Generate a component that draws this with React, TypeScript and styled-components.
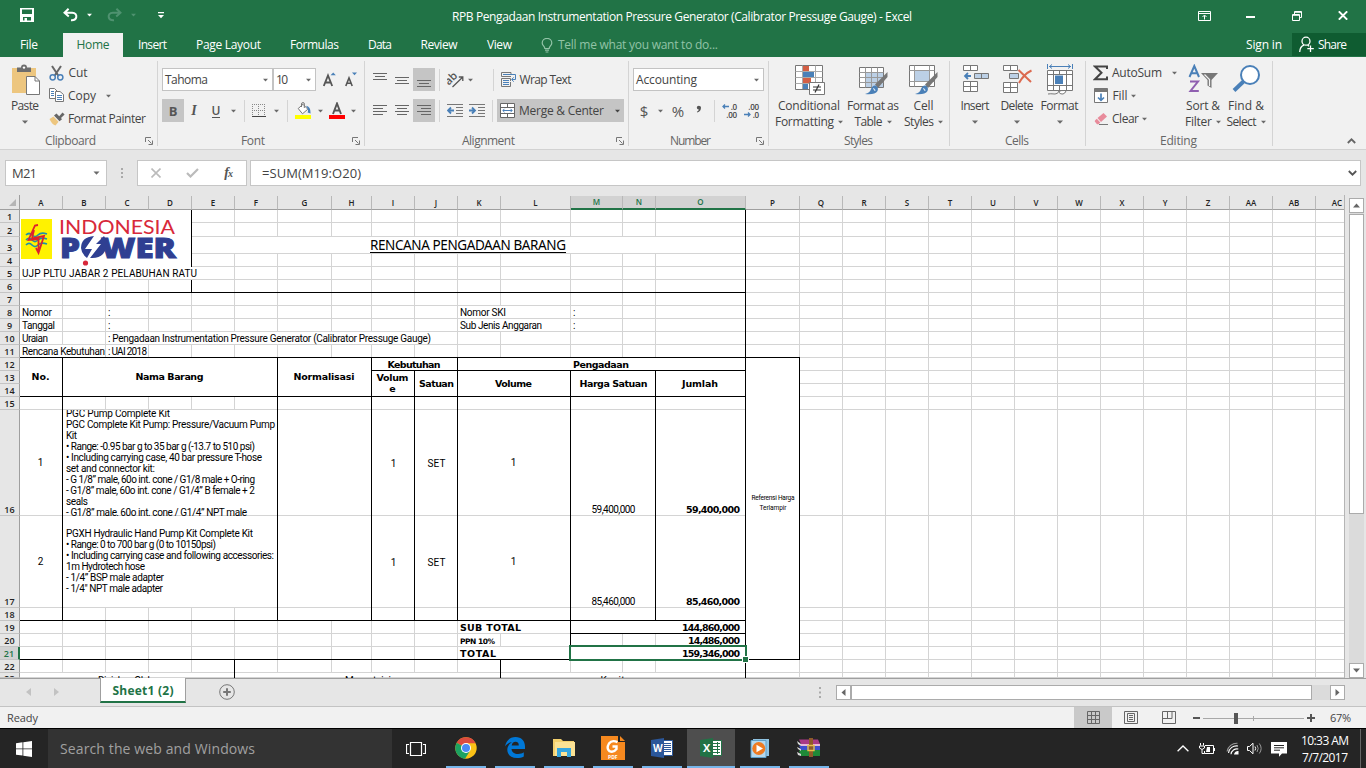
import React, { useLayoutEffect, useRef, useState } from 'react';
import styled, { createGlobalStyle, css } from 'styled-components';

const Global = createGlobalStyle`
  * { box-sizing: border-box; }
  body { margin: 0; overflow: hidden; background: #e6e6e6; }
  svg { display: block; flex: none; }
`;

const UI = `"Open Sans", "Noto Sans", sans-serif`;
const CELL = `Roboto, "Liberation Sans", Arial, sans-serif`;
const CELL_BOLD = `"DejaVu Sans", Verdana, sans-serif`;

/* ---------- text that is tracked to a given width ---------- */

const FitSpan = styled.span`
  display: inline-block;
  flex: none;
  white-space: pre;
`;

function Fit({ w, children }: { w: number; children: string }) {
  const ref = useRef<HTMLSpanElement>(null);
  const [spacing, setSpacing] = useState(0);
  useLayoutEffect(() => {
    const el = ref.current;
    if (!el) return;
    el.style.letterSpacing = '0px';
    const natural = el.getBoundingClientRect().width;
    const next = (w - natural) / Math.max(1, children.length - 1);
    el.style.letterSpacing = `${next}px`;
    setSpacing(next);
  }, [w, children]);
  return (
    <FitSpan ref={ref} style={{ letterSpacing: spacing, marginRight: -spacing }}>
      {children}
    </FitSpan>
  );
}

/* ---------- shared pieces ---------- */

const Window = styled.div`
  width: 1366px;
  height: 768px;
  display: flex;
  flex-direction: column;
  overflow: hidden;
  background: #e6e6e6;
  font-family: ${UI};
  font-size: 12px;
  line-height: 16px;
  color: #444;
`;

const Slot = styled.div<{ $w: number; $ml?: number; $align?: string; $bg?: string; $h?: number; $color?: string }>`
  flex: none;
  width: ${p => p.$w}px;
  margin-left: ${p => p.$ml || 0}px;
  height: ${p => (p.$h ? `${p.$h}px` : 'auto')};
  background: ${p => p.$bg || 'transparent'};
  color: ${p => p.$color || 'inherit'};
  display: flex;
  align-items: center;
  justify-content: ${p => p.$align || 'center'};
`;

const Caret = ({ c = '#6a6a6a', s = 6 }: { c?: string; s?: number }) => (
  <svg width={s} height="4" viewBox="0 0 6 4">
    <path d="M0 0.5H6L3 3.8Z" fill={c} />
  </svg>
);

/* ---------- title bar ---------- */

const TitleBar = styled.header`
  height: 33px;
  flex: none;
  display: flex;
  background: #217346;
  color: #fff;
`;
const QuickBar = styled.div`
  width: 452px;
  height: 30px;
  display: flex;
  align-items: center;
`;
const DocTitle = styled.div`
  width: 746px;
  height: 33px;
  display: flex;
  align-items: center;
`;
const WindowButtons = styled.div`
  display: flex;
  align-items: center;
  height: 31px;
`;

function Title() {
  return (
    <TitleBar>
      <QuickBar>
        <Slot $w={14} $ml={20}>
          <svg width="14" height="14" viewBox="0 0 14 14">
            <path d="M0 0H14V14H0Z M2 1.5V6H12V1.5Z M3 9V12.5H4.5V10H7V12.5H11V9Z" fill="#fff" fillRule="evenodd" />
          </svg>
        </Slot>
        <Slot $w={15} $ml={29}>
          <svg width="15" height="14" viewBox="0 0 15 14" fill="none" stroke="#fff" strokeWidth="2">
            <path d="M5.6 0.8L1.5 4.8L5.8 8.6M1.5 4.8H9.2C12.5 4.8 13.6 7 13.3 9C13 11 11 12.4 8 12.2" />
          </svg>
        </Slot>
        <Slot $w={6} $ml={8}><Caret c="#fff" s={5} /></Slot>
        <Slot $w={15} $ml={15}>
          <svg width="15" height="14" viewBox="0 0 15 14" fill="none" stroke="#4f9270" strokeWidth="2">
            <path d="M9.4 0.8L13.5 4.8L9.2 8.6M13.5 4.8H5.8C2.5 4.8 1.4 7 1.7 9C2 11 4 12.4 7 12.2" />
          </svg>
        </Slot>
        <Slot $w={6} $ml={8}><Caret c="#4f9270" s={5} /></Slot>
        <Slot $w={6} $ml={22}>
          <svg width="6" height="7" viewBox="0 0 6 7">
            <path d="M0 0H6V1.2H0ZM0 3H6L3 6.3Z" fill="#fff" />
          </svg>
        </Slot>
      </QuickBar>
      <DocTitle>
        <Fit w={460}>RPB Pengadaan Instrumentation Pressure Generator (Calibrator Pressuge Gauge) - Excel</Fit>
      </DocTitle>
      <WindowButtons>
        <svg width="13" height="10" viewBox="0 0 13 10" fill="none" stroke="#fff">
          <path d="M0.5 0.5H12.5V9.5H0.5ZM0.5 2.5H12.5M6.5 8.5V4.5M4.5 6L6.5 4L8.5 6" />
        </svg>
        <Slot $w={9} $ml={35}><svg width="9" height="4" viewBox="0 0 9 4"><path d="M0 2H9V4H0Z" fill="#fff" /></svg></Slot>
        <Slot $w={10} $ml={37}>
          <svg width="10" height="10" viewBox="0 0 10 10" fill="none" stroke="#fff">
            <path d="M2.5 3V0.5H9.5V6.5H7.5M2.5 1.3H9.5M0.5 3.5H7.5V9.5H0.5ZM0.5 4.3H7.5" />
          </svg>
        </Slot>
        <Slot $w={10} $ml={36}>
          <svg width="10" height="9" viewBox="0 0 10 9" stroke="#fff" strokeWidth="2"><path d="M0.8 0.4L9.2 8.6M9.2 0.4L0.8 8.6" /></svg>
        </Slot>
      </WindowButtons>
    </TitleBar>
  );
}

/* ---------- ribbon tabs ---------- */

const TabBar = styled.nav`
  height: 24px;
  flex: none;
  display: flex;
  background: #217346;
  color: #fff;
`;
const Tab = styled.div<{ $w: number; $active?: boolean }>`
  width: ${p => p.$w}px;
  height: 24px;
  display: flex;
  align-items: center;
  justify-content: center;
  background: ${p => (p.$active ? '#f1f1f1' : 'transparent')};
  color: ${p => (p.$active ? '#217346' : '#fff')};
`;
const TellMe = styled.div`
  width: 705px;
  display: flex;
  align-items: center;
  gap: 5px;
  padding-left: 13px;
  color: #92c3a7;
`;
const ShareButton = styled.div`
  width: 74px;
  height: 23px;
  margin-left: 10px;
  padding-left: 7px;
  display: flex;
  align-items: center;
  gap: 4px;
  background: #0f5c31;
`;

function Tabs() {
  return (
    <TabBar>
      <Slot $w={63} $align="flex-start"><Slot $w={18} $ml={20}><Fit w={18}>File</Fit></Slot></Slot>
      <Tab $w={60} $active><Fit w={33}>Home</Fit></Tab>
      <Tab $w={59}><Fit w={29}>Insert</Fit></Tab>
      <Tab $w={93}><Fit w={65}>Page Layout</Fit></Tab>
      <Tab $w={79}><Fit w={49}>Formulas</Fit></Tab>
      <Tab $w={52}><Fit w={24}>Data</Fit></Tab>
      <Tab $w={66}><Fit w={37}>Review</Fit></Tab>
      <Tab $w={55}><Fit w={25}>View</Fit></Tab>
      <TellMe>
        <Slot $w={13}>
          <svg width="12" height="15" viewBox="0 0 12 15" fill="none" stroke="#92c3a7" strokeWidth="1.2">
            <path d="M3.8 10.5C3.8 8 1.2 7.8 1.2 5A4.6 4.4 0 0 1 10.8 5C10.8 7.8 8.2 8 8.2 10.5ZM4 12.2H8M4.6 14H7.4" />
          </svg>
        </Slot>
        <Fit w={160}>Tell me what you want to do...</Fit>
      </TellMe>
      <Slot $w={36} $ml={14}><Fit w={36}>Sign in</Fit></Slot>
      <ShareButton>
        <svg width="15" height="17" viewBox="0 0 15 17" fill="none" stroke="#fff" strokeWidth="1.3">
          <circle cx="7" cy="5.2" r="4" />
          <path d="M0.7 16C0.9 12 2.6 10 5 9.2M8.6 9L10 10.3M11.5 9.5V16M8.3 12.7H14.8" />
        </svg>
        <Fit w={29}>Share</Fit>
      </ShareButton>
    </TabBar>
  );
}

/* ---------- ribbon ---------- */

const RibbonBar = styled.section`
  height: 93px;
  flex: none;
  display: flex;
  background: #f1f1f1;
  border-bottom: 1px solid #d2d2d2;
  padding-top: 4px;
`;
const Group = styled.div<{ $w: number }>`
  width: ${p => p.$w}px;
  height: 85px;
  flex: none;
  display: flex;
  flex-direction: column;
  border-right: 1px solid #d4d4d4;
`;
const GroupBody = styled.div`
  height: 70px;
  display: flex;
`;
const GroupLabel = styled.div<{ $pl: number }>`
  height: 15px;
  display: flex;
  align-items: center;
  justify-content: space-between;
  padding: 5px 4px 0 ${p => p.$pl}px;
  color: #666;
`;
const TwoRows = styled.div`
  display: flex;
  flex-direction: column;
  padding-top: 7px;
  gap: 8px;
`;
const ThreeRows = styled.div<{ $ml?: number }>`
  display: flex;
  flex-direction: column;
  margin-left: ${p => p.$ml || 0}px;
`;
const ToolRow = styled.div`
  height: 23px;
  display: flex;
  align-items: center;
`;
const Combo = styled.div<{ $w: number; $ml?: number }>`
  width: ${p => p.$w}px;
  height: 23px;
  margin-left: ${p => p.$ml || 0}px;
  padding: 0 4px 0 2px;
  display: flex;
  align-items: center;
  justify-content: space-between;
  background: #fff;
  border: 1px solid #c3c3c3;
`;
const Divider = styled.div<{ $ml: number }>`
  width: 1px;
  height: 22px;
  margin-left: ${p => p.$ml}px;
  background: #d4d4d4;
`;
const BigButton = styled.div<{ $w: number; $ml?: number }>`
  width: ${p => p.$w}px;
  margin-left: ${p => p.$ml || 0}px;
  flex: none;
  display: flex;
  flex-direction: column;
  align-items: center;
  padding-top: 3px;
`;
const BigIcon = styled.div`
  height: 34px;
  display: flex;
`;
const Line = styled.div`
  height: 16px;
  display: flex;
  align-items: center;
  justify-content: center;
  gap: 4px;
`;
const Glyph = styled.span<{ $size: number; $weight?: number; $italic?: boolean; $serif?: boolean; $under?: boolean }>`
  font-size: ${p => p.$size}px;
  line-height: 20px;
  font-weight: ${p => p.$weight || 400};
  font-style: ${p => (p.$italic ? 'italic' : 'normal')};
  font-family: ${p => (p.$serif ? `"Liberation Serif", serif` : UI)};
  ${p => p.$under && css`border-bottom: 1px solid #555; line-height: 13px;`}
  color: #555;
`;

const Launcher = () => (
  <svg width="8" height="8" viewBox="0 0 8 8" fill="none" stroke="#777">
    <path d="M0.5 5V0.5H6M3 3L6.5 6.5M7.5 3.5V7.5H3.5" />
  </svg>
);

const Lines = ({ rows, y = 1, gap = 3 }: { rows: [number, number][]; y?: number; gap?: number }) => (
  <svg width="14" height="14" viewBox="0 0 14 14" shapeRendering="crispEdges">
    {rows.map(([x, w], i) => (
      <rect key={i} x={x} y={y + i * gap} width={w} height="1" fill="#666" />
    ))}
  </svg>
);

function ClipboardGroup() {
  return (
    <Group $w={158}>
      <GroupBody>
        <BigButton $w={32} $ml={9}>
          <BigIcon>
            <svg width="30" height="31" viewBox="0 0 30 31">
              <path d="M2 4H26V29H2Z" fill="#edc67f" />
              <path d="M7 8V3.5H11Q11 0.5 14 0.5T17 3.5H21V8Z" fill="#6d6d6d" />
              <circle cx="14" cy="3.6" r="1.2" fill="#fff" />
              <path d="M16.5 12.5H25L29.5 17V30.5H16.5Z" fill="#fff" stroke="#777" />
              <path d="M25 12.5V17H29.5" fill="none" stroke="#777" />
            </svg>
          </BigIcon>
          <Line><Fit w={28}>Paste</Fit></Line>
          <Line><Caret /></Line>
        </BigButton>
        <ThreeRows $ml={8}>
          <ToolRow>
            <svg width="15" height="16" viewBox="0 0 15 16" fill="none">
              <path d="M3 1L9.6 11M12 1L5.4 11" stroke="#666" strokeWidth="2" />
              <circle cx="3.7" cy="12.3" r="2.6" stroke="#4a80b8" strokeWidth="1.5" />
              <circle cx="11.3" cy="12.3" r="2.6" stroke="#4a80b8" strokeWidth="1.5" />
            </svg>
            <Slot $w={20} $ml={4}><Fit w={19}>Cut</Fit></Slot>
          </ToolRow>
          <ToolRow>
            <svg width="15" height="15" viewBox="0 0 15 15" fill="#fff" stroke="#777">
              <path d="M0.5 0.5H5.5L8.5 3.5V10.5H0.5Z" />
              <path d="M6.5 3.5H11L14.5 6.5V13.5H6.5Z" />
              <path d="M2 3.5H5M2 5.5H5M2 7.5H5M8 7.5H13M8 9.5H13M8 11.5H13" stroke="#4a80b8" />
            </svg>
            <Slot $w={28} $ml={4}><Fit w={28}>Copy</Fit></Slot>
            <Slot $w={6} $ml={9}><Caret s={5} /></Slot>
          </ToolRow>
          <ToolRow>
            <svg width="16" height="14" viewBox="0 0 16 14">
              <path d="M0.5 7L4.5 4.5L9.5 9.8L6.5 13.5Q3 12.5 0.5 7Z" fill="#edc67f" />
              <path d="M5 3.5L7.5 1.5L10.2 4.2L13.5 0.4L15.6 2.4L12 6L13 7.2L10.5 9.3Z" fill="#666" />
            </svg>
            <Slot $w={78} $ml={3}><Fit w={78}>Format Painter</Fit></Slot>
          </ToolRow>
        </ThreeRows>
      </GroupBody>
      <GroupLabel $pl={45}><Fit w={51}>Clipboard</Fit><Launcher /></GroupLabel>
    </Group>
  );
}

function FontGroup() {
  return (
    <Group $w={207}>
      <GroupBody>
        <TwoRows>
          <ToolRow>
            <Combo $w={111} $ml={4}><Fit w={43}>Tahoma</Fit><Caret s={5} /></Combo>
            <Combo $w={43}><Fit w={12}>10</Fit><Caret s={5} /></Combo>
            <Slot $w={13} $ml={7}>
              <svg width="13" height="16" viewBox="0 0 13 16">
                <path d="M0.8 14L5 3.5L9.2 14M2.3 10.5H7.8" fill="none" stroke="#555" strokeWidth="1.8" />
                <path d="M7.6 3.2L10.2 0.4L12.8 3.2Z" fill="#4a80b8" />
              </svg>
            </Slot>
            <Slot $w={12} $ml={9}>
              <svg width="12" height="16" viewBox="0 0 12 16">
                <path d="M0.8 14L4 6L7.2 14M2 11.3H6" fill="none" stroke="#555" strokeWidth="1.6" />
                <path d="M7 0.5H12L9.5 3.2Z" fill="#4a80b8" />
              </svg>
            </Slot>
          </ToolRow>
          <ToolRow>
            <Slot $w={22} $ml={4} $h={23} $bg="#c5c5c5"><Glyph $size={13} $weight={700}>B</Glyph></Slot>
            <Slot $w={14} $ml={3}><Glyph $size={14} $weight={700} $italic $serif>I</Glyph></Slot>
            <Slot $w={12} $ml={9}><Glyph $size={12} $weight={600} $under>U</Glyph></Slot>
            <Slot $w={6} $ml={8}><Caret s={5} /></Slot>
            <Divider $ml={8} />
            <Slot $w={14} $ml={7}>
              <svg width="14" height="14" viewBox="0 0 14 14" shapeRendering="crispEdges" fill="none" stroke="#888">
                <path d="M0.5 0V13M6.5 0V13M12.5 0V13M0 0.5H13M0 6.5H13" strokeDasharray="1 1" />
                <path d="M0 12.5H14" stroke="#444" />
              </svg>
            </Slot>
            <Slot $w={6} $ml={7}><Caret s={5} /></Slot>
            <Divider $ml={8} />
            <Slot $w={16} $ml={7}>
              <svg width="16" height="17" viewBox="0 0 16 17">
                <path d="M3.2 6.5L8 2.3L12.8 7.2L7.5 11.8Z" fill="#fff" stroke="#777" />
                <path d="M6.5 5V2Q6.5 0.6 8 0.6T9.3 2V6" fill="none" stroke="#777" />
                <path d="M11 3.8Q15.8 4.5 15.6 11.5L12.6 10.5Q14 8 11 3.8Z" fill="#4a80b8" />
                <path d="M0 13H16V17H0Z" fill="#ff0" />
              </svg>
            </Slot>
            <Slot $w={6} $ml={6}><Caret s={5} /></Slot>
            <Slot $w={16} $ml={6}>
              <svg width="16" height="17" viewBox="0 0 16 17">
                <path d="M4 12L8 1.5L12 12M5.4 8.5H10.6" fill="none" stroke="#555" strokeWidth="1.9" />
                <path d="M0 13H16V17H0Z" fill="#f00" />
              </svg>
            </Slot>
            <Slot $w={6} $ml={5}><Caret s={5} /></Slot>
          </ToolRow>
        </TwoRows>
      </GroupBody>
      <GroupLabel $pl={83}><Fit w={24}>Font</Fit><Launcher /></GroupLabel>
    </Group>
  );
}

function AlignmentGroup() {
  return (
    <Group $w={264}>
      <GroupBody>
        <TwoRows>
          <ToolRow>
            <Slot $w={14} $ml={8}><Lines y={0} rows={[[0, 14], [2, 10], [0, 14]]} /></Slot>
            <Slot $w={14} $ml={8}><Lines y={4} rows={[[0, 14], [2, 10], [0, 14]]} /></Slot>
            <Slot $w={22} $ml={4} $h={23} $bg="#c5c5c5"><Lines y={7} rows={[[0, 14], [2, 10], [0, 14]]} /></Slot>
            <Divider $ml={4} />
            <Slot $w={16} $ml={7}>
              <svg width="17" height="16" viewBox="0 0 17 16" fill="none" stroke="#555" strokeWidth="1.3">
                <path d="M5.5 15L15.3 5.5M11.8 5H15.8V9" />
                <text x="-2" y="9.5" transform="rotate(-45 5 7)" fontFamily="Open Sans" fontSize="11" fontWeight="600" fill="#555" stroke="none">ab</text>
              </svg>
            </Slot>
            <Slot $w={6} $ml={4}><Caret s={5} /></Slot>
            <Divider $ml={20} />
            <Slot $w={16} $ml={7}>
              <svg width="16" height="15" viewBox="0 0 16 15" fill="none" stroke="#777">
                <path d="M0.5 0.5H10M0.5 0.5V4.5H10M0.5 6.5V14.5H9.5V10M0.5 6.5H9.5V9M10 0.5V2" />
                <path d="M2 2.5H14.5V7.5H11M12.8 5.3L10.6 7.5L12.8 9.7M2 8.5H8M2 10.5H8M2 12.5H8" stroke="#4a80b8" />
              </svg>
            </Slot>
            <Slot $w={53} $ml={2}><Fit w={52}>Wrap Text</Fit></Slot>
          </ToolRow>
          <ToolRow>
            <Slot $w={14} $ml={8}><Lines rows={[[0, 14], [0, 10], [0, 14], [0, 10]]} /></Slot>
            <Slot $w={14} $ml={8}><Lines rows={[[0, 14], [2, 10], [0, 14], [2, 10]]} /></Slot>
            <Slot $w={22} $ml={4} $h={23} $bg="#c5c5c5"><Lines rows={[[0, 14], [4, 10], [0, 14], [4, 10]]} /></Slot>
            <Divider $ml={4} />
            <Slot $w={16} $ml={7}>
              <svg width="16" height="13" viewBox="0 0 16 13" fill="none" stroke="#777">
                <path d="M0 0.5H16M9 3.5H16M9 6.5H16M9 9.5H16M0 12.5H16" />
                <path d="M7 6.5H1.5M4 3.5L1 6.5L4 9.5" stroke="#4a80b8" strokeWidth="1.8" />
              </svg>
            </Slot>
            <Slot $w={16} $ml={6}>
              <svg width="16" height="13" viewBox="0 0 16 13" fill="none" stroke="#777">
                <path d="M0 0.5H16M9 3.5H16M9 6.5H16M9 9.5H16M0 12.5H16" />
                <path d="M0 6.5H5.5M3 3.5L6 6.5L3 9.5" stroke="#4a80b8" strokeWidth="1.8" />
              </svg>
            </Slot>
            <Divider $ml={7} />
            <Slot $w={127} $ml={4} $h={23} $bg="#c5c5c5" $align="flex-start">
              <Slot $w={15} $ml={3}>
                <svg width="15" height="15" viewBox="0 0 15 15" fill="#fff" stroke="#666">
                  <path d="M0.5 0.5H14.5V14.5H0.5ZM0.5 4.5H14.5M0.5 10.5H14.5M7.5 0.5V4.5M7.5 10.5V14.5" />
                  <path d="M3 7.5H12M4.5 5.8L2.8 7.5L4.5 9.2M10.5 5.8L12.2 7.5L10.5 9.2" stroke="#4a80b8" fill="none" />
                </svg>
              </Slot>
              <Slot $w={85} $ml={4}><Fit w={85}>Merge &amp; Center</Fit></Slot>
              <Slot $w={6} $ml={10}><Caret c="#444" s={5} /></Slot>
            </Slot>
          </ToolRow>
        </TwoRows>
      </GroupBody>
      <GroupLabel $pl={97}><Fit w={53}>Alignment</Fit><Launcher /></GroupLabel>
    </Group>
  );
}

const Decimals = styled.div`
  display: flex;
  flex-direction: column;
  font-size: 8px;
  line-height: 8px;
  letter-spacing: -0.2px;
  width: 15px;
  font-weight: 600;
`;
const DecRow = styled.div<{ $end?: boolean }>`
  display: flex;
  align-items: center;
  height: 8px;
  justify-content: ${p => (p.$end ? 'flex-end' : 'space-between')};
`;
const Arrow = ({ flip }: { flip?: boolean }) => (
  <svg width="7" height="5" viewBox="0 0 7 5" fill="none" stroke="#4a80b8" strokeWidth="1.3">
    <path d={flip ? 'M0 2.5H6M4 0.5L6 2.5L4 4.5' : 'M7 2.5H1M3 0.5L1 2.5L3 4.5'} />
  </svg>
);

function NumberGroup() {
  return (
    <Group $w={140}>
      <GroupBody>
        <TwoRows>
          <ToolRow><Combo $w={131} $ml={4}><Fit w={61}>Accounting</Fit><Caret s={5} /></Combo></ToolRow>
          <ToolRow>
            <Slot $w={10} $ml={10}><Glyph $size={15}>$</Glyph></Slot>
            <Slot $w={6} $ml={8}><Caret s={5} /></Slot>
            <Slot $w={14} $ml={8}><Glyph $size={15}>%</Glyph></Slot>
            <Slot $w={8} $ml={10}>
              <svg width="6" height="12" viewBox="0 0 6 12"><path d="M5 2.5Q5 6.5 1.3 7.6L0.9 6.8Q2.8 6 2.8 4.5Q0.8 4.5 0.8 2.5Q0.8 0.7 2.8 0.7Q5 0.7 5 2.5Z" fill="#555" /></svg>
            </Slot>
            <Divider $ml={11} />
            <Slot $w={15} $ml={7}>
              <Decimals><DecRow><Arrow />.0</DecRow><DecRow $end>.00</DecRow></Decimals>
            </Slot>
            <Slot $w={15} $ml={7}>
              <Decimals><DecRow $end>.00</DecRow><DecRow><Arrow flip />.0</DecRow></Decimals>
            </Slot>
          </ToolRow>
        </TwoRows>
      </GroupBody>
      <GroupLabel $pl={41}><Fit w={41}>Number</Fit><Launcher /></GroupLabel>
    </Group>
  );
}

const Brush = () => (
  <>
    <path d="M29.5 8L17 20.5L20 24L29.5 13Z" fill="#777" />
    <path d="M7 30Q12 29 13 25Q14.5 21 17.5 21.5Q21 23 19.5 27Q17 31 7 30Z" fill="#4a80b8" />
    <path d="M15 24.5Q17 25 17 27" fill="none" stroke="#cfe0f0" strokeWidth="1.2" />
  </>
);

function StylesGroup() {
  return (
    <Group $w={181}>
      <GroupBody>
        <BigButton $w={70} $ml={5}>
          <BigIcon>
            <svg width="31" height="31" viewBox="0 0 31 31">
              <path d="M1.5 1.5H28.5V25.5H1.5Z" fill="#fff" stroke="#777" />
              <path d="M9 2H15V8H9ZM9 14H17V20H9Z" fill="#d35f45" />
              <path d="M9 8H20V13H9ZM9 20H14V25H9Z" fill="#4a80b8" />
              <path d="M1.5 7.5H28.5M1.5 13.5H28.5M1.5 19.5H28.5M8.5 1.5V25M21.5 1.5V25" stroke="#aaa" fill="none" />
              <path d="M15.5 18.5H30.5V30.5H15.5Z" fill="#fff" stroke="#777" />
              <path d="M19 23H27M19 26H27M25 20.5L21 28.5" stroke="#333" strokeWidth="1.2" />
            </svg>
          </BigIcon>
          <Line><Fit w={62}>Conditional</Fit></Line>
          <Line><Fit w={59}>Formatting</Fit><Caret s={5} /></Line>
        </BigButton>
        <BigButton $w={58}>
          <BigIcon>
            <svg width="31" height="31" viewBox="0 0 31 31">
              <path d="M1.5 3.5H25.5V23.5H1.5Z" fill="#fff" stroke="#777" />
              <path d="M8 9H25V23H8Z" fill="#bcd0e6" />
              <path d="M1.5 8.5H25.5M1.5 13.5H25.5M1.5 18.5H25.5M7.5 3.5V23.5M13.5 3.5V23.5M19.5 3.5V23.5" stroke="#999" fill="none" />
              <Brush />
            </svg>
          </BigIcon>
          <Line><Fit w={52}>Format as</Fit></Line>
          <Line><Fit w={28}>Table</Fit><Caret s={5} /></Line>
        </BigButton>
        <BigButton $w={43}>
          <BigIcon>
            <svg width="31" height="31" viewBox="0 0 31 31">
              <path d="M1.5 1.5H26.5V22.5H1.5Z" fill="#fff" stroke="#777" />
              <path d="M6.5 1.5V22.5M21.5 1.5V22.5M1.5 6.5H26.5M1.5 17.5H26.5" stroke="#999" fill="none" />
              <path d="M7 7H21V17H7Z" fill="#bcd0e6" />
              <Brush />
            </svg>
          </BigIcon>
          <Line><Fit w={20}>Cell</Fit></Line>
          <Line><Fit w={30}>Styles</Fit><Caret s={5} /></Line>
        </BigButton>
      </GroupBody>
      <GroupLabel $pl={75}><Fit w={29}>Styles</Fit></GroupLabel>
    </Group>
  );
}

function CellsGroup() {
  return (
    <Group $w={136}>
      <GroupBody>
        <BigButton $w={42} $ml={4}>
          <BigIcon>
            <svg width="28" height="31" viewBox="0 0 28 31" fill="#fff" stroke="#777">
              <path d="M2.5 1.5H16.5V6.5H2.5ZM9.5 1.5V6.5M2.5 17.5H16.5V27.5H2.5ZM9.5 17.5V27.5M2.5 22.5H16.5" />
              <path d="M13.5 9.5H27.5V14.5H13.5ZM20.5 9.5V14.5" fill="#bcd0e6" />
              <path d="M10 12H4.5M7 9L4 12L7 15" stroke="#4a80b8" strokeWidth="1.8" fill="none" />
            </svg>
          </BigIcon>
          <Line><Fit w={29}>Insert</Fit></Line>
          <Line><Caret /></Line>
        </BigButton>
        <BigButton $w={42}>
          <BigIcon>
            <svg width="30" height="31" viewBox="0 0 30 31" fill="#fff" stroke="#777">
              <path d="M1.5 1.5H15.5V6.5H1.5ZM8.5 1.5V6.5M1.5 18.5H15.5V28.5H1.5ZM8.5 18.5V28.5M1.5 23.5H15.5" />
              <path d="M7.5 9.5H16.5V14.5H7.5Z" fill="#bcd0e6" />
              <path d="M16.5 6L29 18M29.5 6.5Q22 10 17 19" stroke="#dc6a50" strokeWidth="2" fill="none" />
            </svg>
          </BigIcon>
          <Line><Fit w={33}>Delete</Fit></Line>
          <Line><Caret /></Line>
        </BigButton>
        <BigButton $w={43}>
          <BigIcon>
            <svg width="28" height="31" viewBox="0 0 28 31" fill="#fff" stroke="#777">
              <path d="M1.5 6.5H26.5V26.5H1.5ZM7.5 6.5V26M20.5 6.5V26M1.5 10.5H26.5M1.5 21.5H26.5M13.5 6.5V11M13.5 21V26" />
              <path d="M9 11.5H17V20H9Z" fill="#4a80b8" stroke="none" />
              <path d="M2 30Q4 29.5 9 30Q12 30 13 27L14 27Q12 30 17 30Q19 29.5 20 27" />
              <path d="M1.5 0V5M26.5 0V5M3 2.5H25M6 0.5L3.5 2.5L6 4.5M22 0.5L24.5 2.5L22 4.5" stroke="#4a80b8" fill="none" />
            </svg>
          </BigIcon>
          <Line><Fit w={38}>Format</Fit></Line>
          <Line><Caret /></Line>
        </BigButton>
      </GroupBody>
      <GroupLabel $pl={55}><Fit w={24}>Cells</Fit></GroupLabel>
    </Group>
  );
}

function EditingGroup() {
  return (
    <Group $w={187}>
      <GroupBody>
        <ThreeRows $ml={7}>
          <ToolRow>
            <svg width="15" height="16" viewBox="0 0 15 16" fill="none" stroke="#444" strokeWidth="2">
              <path d="M14 4V1.5H2L8.5 7.7L2 14.2H14V11.5" />
            </svg>
            <Slot $w={50} $ml={4}><Fit w={50}>AutoSum</Fit></Slot>
            <Slot $w={6} $ml={9}><Caret s={5} /></Slot>
          </ToolRow>
          <ToolRow>
            <Slot $w={15}>
              <svg width="14" height="15" viewBox="0 0 14 15">
                <path d="M0.5 0.5H13.5V14.5H0.5Z" fill="#fff" stroke="#777" />
                <path d="M0.5 0.5H13.5V4H0.5Z" fill="#777" />
                <path d="M7 5.5V12M4 9.5L7 12.3L10 9.5" fill="none" stroke="#4a80b8" strokeWidth="1.7" />
              </svg>
            </Slot>
            <Slot $w={16} $ml={4}><Fit w={15}>Fill</Fit></Slot>
            <Slot $w={6} $ml={2}><Caret s={5} /></Slot>
          </ToolRow>
          <ToolRow>
            <Slot $w={15}>
              <svg width="14" height="14" viewBox="0 0 14 14">
                <path d="M3.5 6L9.5 1L13 4.5L7 10Z" fill="#e88b9b" />
                <path d="M2.8 6.8L6.3 10.6L4.5 12.2H3L0.8 9.6Q0.5 8.8 1.2 8.2Z" fill="#e88b9b" />
                <path d="M5 12.5H14" stroke="#777" />
              </svg>
            </Slot>
            <Slot $w={27} $ml={4}><Fit w={27}>Clear</Fit></Slot>
            <Slot $w={6} $ml={2}><Caret s={5} /></Slot>
          </ToolRow>
        </ThreeRows>
        <BigButton $w={40} $ml={6}>
          <BigIcon>
            <svg width="30" height="31" viewBox="0 0 30 31" fill="none">
              <path d="M1.5 13L6.3 2L11 13M3.2 9.2H9.4" stroke="#4a80b8" strokeWidth="2" />
              <path d="M2 17.5H10L2.5 27H10.8" stroke="#8f5fb0" strokeWidth="2" />
              <path d="M13 9H30L23.5 16V24L19.5 21.5V16Z" fill="#777" />
              <path d="M16.5 10.5L21.5 15.5V22" stroke="#f1f1f1" strokeWidth="1.2" />
            </svg>
          </BigIcon>
          <Line><Fit w={34}>Sort &amp;</Fit></Line>
          <Line><Fit w={27}>Filter</Fit><Caret s={5} /></Line>
        </BigButton>
        <BigButton $w={46}>
          <BigIcon>
            <svg width="29" height="31" viewBox="0 0 29 31">
              <path d="M2 26.5L11.5 17.5" stroke="#4a80b8" strokeWidth="4" />
              <circle cx="18" cy="11" r="9" fill="#fff" stroke="#4a80b8" strokeWidth="2" />
            </svg>
          </BigIcon>
          <Line><Fit w={36}>Find &amp;</Fit></Line>
          <Line><Fit w={30}>Select</Fit><Caret s={5} /></Line>
        </BigButton>
      </GroupBody>
      <GroupLabel $pl={74}><Fit w={37}>Editing</Fit></GroupLabel>
    </Group>
  );
}

const Collapse = styled.div`
  flex: 1;
  display: flex;
  align-items: flex-end;
  justify-content: flex-end;
  padding: 0 10px 5px 0;
`;

function Ribbon() {
  return (
    <RibbonBar>
      <ClipboardGroup />
      <FontGroup />
      <AlignmentGroup />
      <NumberGroup />
      <StylesGroup />
      <CellsGroup />
      <EditingGroup />
      <Collapse>
        <svg width="9" height="6" viewBox="0 0 9 6"><path d="M0.8 5L4.5 1.3L8.2 5" fill="none" stroke="#666" strokeWidth="1.8" /></svg>
      </Collapse>
    </RibbonBar>
  );
}

/* ---------- formula bar ---------- */

const FormulaBar = styled.section`
  height: 45px;
  flex: none;
  display: flex;
  padding: 10px 0 0 5px;
  font-size: 13px;
`;
const Box = styled.div<{ $w: number; $ml?: number; $pl?: number; $pr?: number }>`
  width: ${p => p.$w}px;
  height: 26px;
  margin-left: ${p => p.$ml || 0}px;
  padding: 0 ${p => p.$pr || 0}px 0 ${p => p.$pl || 0}px;
  border: 1px solid #c6c6c6;
  background: #fff;
  display: flex;
  align-items: center;
  justify-content: space-between;
`;
const FxGlyph = styled.span`
  font: italic 700 14px "Liberation Serif", serif;
  letter-spacing: -1px;
  color: #555;
  small { font-size: 10px; }
`;

function Formula() {
  return (
    <FormulaBar>
      <Box $w={102} $pl={6} $pr={6}><Fit w={25}>M21</Fit><Caret s={7} /></Box>
      <Slot $w={30} $h={26} $align="center">
        <svg width="2" height="12" viewBox="0 0 2 12"><path d="M0 1H2V3H0ZM0 5H2V7H0ZM0 9H2V11H0Z" fill="#aaa" /></svg>
      </Slot>
      <Box $w={110} $pl={13} $pr={14}>
        <svg width="10" height="10" viewBox="0 0 10 10"><path d="M0.5 0.5L9.5 9.5M9.5 0.5L0.5 9.5" stroke="#bbb" strokeWidth="1.6" /></svg>
        <svg width="13" height="10" viewBox="0 0 13 10"><path d="M1 5L4.5 8.5L12 1" fill="none" stroke="#bbb" strokeWidth="2.2" /></svg>
        <FxGlyph>f<small>x</small></FxGlyph>
      </Box>
      <Box $w={1111} $ml={3} $pl={11} $pr={3}>
        <Fit w={99}>=SUM(M19:O20)</Fit>
        <svg width="9" height="6" viewBox="0 0 9 6"><path d="M0.8 1L4.5 4.7L8.2 1" fill="none" stroke="#555" strokeWidth="1.8" /></svg>
      </Box>
    </FormulaBar>
  );
}

/* ---------- worksheet ---------- */

const COLS = [43, 43, 43, 43, 43, 43, 54, 40, 43, 43, 43, 70, 52, 33, 90, 54, 43, 43, 43, 43, 43, 43, 43, 43, 43, 43, 43, 43, 43];
const NAMES = 'A B C D E F G H I J K L M N O P Q R S T U V W X Y Z AA AB AC'.split(' ');
const ROWS = [13, 14, 17, 13, 13, 13, 13, 13, 13, 13, 13, 13, 13, 13, 13, 106, 92, 13, 13, 13, 13, 13, 5];

const SheetArea = styled.main`
  height: 483px;
  flex: none;
  display: flex;
`;
const SheetGrid = styled.div`
  width: 1344px;
  height: 483px;
  flex: none;
  display: grid;
  grid-template-columns: 20px ${COLS.map(c => `${c}px`).join(' ')};
  grid-template-rows: 15px ${ROWS.map(r => `${r}px`).join(' ')};
  overflow: hidden;
  font-family: ${CELL};
  font-size: 10px;
  line-height: 11px;
  color: #000;
`;
const Corner = styled.div`
  display: flex;
  align-items: flex-end;
  justify-content: flex-end;
  padding: 0 3px 3px 0;
  border-right: 1px solid #9f9f9f;
  border-bottom: 1px solid #9f9f9f;
`;
const ColHead = styled.div<{ $on: boolean }>`
  min-width: 0;
  overflow: hidden;
  display: flex;
  align-items: center;
  justify-content: center;
  font: 600 8px/12px ${UI};
  margin-top: 1px;
  background: ${p => (p.$on ? '#d2d2d2' : '#e6e6e6')};
  color: ${p => (p.$on ? '#217346' : '#222')};
  border-right: 1px solid #b8b8b8;
  border-bottom: ${p => (p.$on ? '2px solid #217346' : '1px solid #9f9f9f')};
`;
const RowHead = styled.div<{ $on: boolean; $top: boolean }>`
  min-height: 0;
  overflow: hidden;
  display: flex;
  align-items: ${p => (p.$top ? 'flex-start' : 'flex-end')};
  justify-content: center;
  font: 600 9px/11px ${UI};
  background: ${p => (p.$on ? '#d2d2d2' : '#e6e6e6')};
  color: ${p => (p.$on ? '#217346' : '#222')};
  border-bottom: 1px solid #c4c4c4;
  border-right: ${p => (p.$on ? '2px solid #217346' : '1px solid #9f9f9f')};
`;

type Area = {
  a: [number, number, number, number];
  t?: string[];
  w?: number[];
  h?: 'flex-start' | 'center' | 'flex-end';
  v?: 'flex-start' | 'center' | 'flex-end';
  bold?: boolean;
  size?: number;
  lh?: number;
  pad?: string;
};

const cellPadding = (h?: string, v?: string) => {
  const bottom = v === 'center' ? 2 : 1;
  if (h === 'center') return `0 2px ${bottom}px 0`;
  if (h === 'flex-end') return `0 6px ${bottom}px 0`;
  return `0 2px ${bottom}px 2px`;
};

const Cell = styled.div<{ $area: string; $shadow: string; $h?: string; $v?: string; $bold?: boolean; $size?: number; $lh?: number; $pad?: string }>`
  grid-area: ${p => p.$area};
  min-width: 0;
  min-height: 0;
  overflow: hidden;
  background: #fff;
  box-shadow: ${p => p.$shadow};
  display: flex;
  flex-direction: column;
  align-items: ${p => p.$h || 'flex-start'};
  justify-content: ${p => p.$v || 'flex-end'};
  padding: ${p => p.$pad || cellPadding(p.$h, p.$v)};
  font-family: ${p => (p.$bold ? CELL_BOLD : CELL)};
  font-weight: ${p => (p.$bold ? 700 : 400)};
  font-size: ${p => p.$size || (p.$bold ? 9.5 : 10)}px;
  line-height: ${p => p.$lh || 11}px;
`;

const AREAS: Area[] = [
  { a: [1, 1, 4, 4] },
  { a: [3, 5, 3, 15], h: 'center', t: ['RENCANA PENGADAAN BARANG'], w: [196] },
  { a: [5, 1, 5, 5], t: ['UJP PLTU JABAR 2 PELABUHAN RATU'], w: [175] },
  { a: [8, 1, 8, 1], t: ['Nomor'], w: [30] },
  { a: [8, 3, 8, 3], t: [':'], w: [3] },
  { a: [8, 11, 8, 12], t: ['Nomor SKI'], w: [46] },
  { a: [8, 13, 8, 13], t: [':'], w: [3] },
  { a: [9, 1, 9, 1], t: ['Tanggal'], w: [33] },
  { a: [9, 3, 9, 3], t: [':'], w: [3] },
  { a: [9, 11, 9, 12], t: ['Sub Jenis Anggaran'], w: [82] },
  { a: [9, 13, 9, 13], t: [':'], w: [3] },
  { a: [10, 1, 10, 1], t: ['Uraian'], w: [26] },
  { a: [10, 3, 10, 10], t: [': Pengadaan Instrumentation Pressure Generator (Calibrator Pressuge Gauge)'], w: [323] },
  { a: [11, 1, 11, 2], t: ['Rencana Kebutuhan'], w: [83], pad: '0 0 1px 2px' },
  { a: [11, 3, 11, 3], t: [': UAI 2018'], w: [39], pad: '0 0 1px 2px' },
  { a: [12, 1, 14, 1], t: ['No.'], w: [18], h: 'center', v: 'center', bold: true },
  { a: [12, 2, 14, 6], t: ['Nama Barang'], w: [68], h: 'center', v: 'center', bold: true },
  { a: [12, 7, 14, 8], t: ['Normalisasi'], w: [61], h: 'center', v: 'center', bold: true },
  { a: [12, 9, 12, 10], t: ['Kebutuhan'], w: [53], h: 'center', bold: true },
  { a: [12, 11, 12, 15], t: ['Pengadaan'], w: [56], h: 'center', bold: true },
  { a: [13, 9, 14, 9], t: ['Volum', 'e'], w: [32, 6], h: 'center', v: 'center', bold: true },
  { a: [13, 10, 14, 10], t: ['Satuan'], w: [35], h: 'center', v: 'center', bold: true, pad: '0 0 2px' },
  { a: [13, 11, 14, 12], t: ['Volume'], w: [37], h: 'center', v: 'center', bold: true },
  { a: [13, 13, 14, 14], t: ['Harga Satuan'], w: [68], h: 'center', v: 'center', bold: true, pad: '0 0 2px' },
  { a: [13, 15, 14, 15], t: ['Jumlah'], w: [36], h: 'center', v: 'center', bold: true },
  { a: [12, 16, 21, 16], t: ['Referensi Harga', 'Terlampir'], w: [43, 27], h: 'center', v: 'center', size: 6.5, lh: 10, pad: '0 0 12px' },
  { a: [15, 7, 15, 8] },
  { a: [15, 11, 15, 12] },
  { a: [15, 13, 15, 14] },
  { a: [16, 1, 16, 1], t: ['1'], w: [5], h: 'center', v: 'center' },
  {
    a: [16, 2, 16, 6], v: 'center', pad: '0 0 1px 3px',
    t: [
      'PGC Pump Complete Kit',
      'PGC Complete Kit Pump: Pressure/Vacuum Pump',
      'Kit',
      '• Range: -0.95 bar g to 35 bar g (-13.7 to 510 psi)',
      '• Including carrying case, 40 bar pressure T-hose',
      'set and connector kit:',
      '- G 1/8” male, 60o int. cone / G1/8 male + O-ring',
      '- G1/8” male, 60o int. cone / G1/4” B female + 2',
      'seals',
      '- G1/8” male, 60o int. cone / G1/4” NPT male',
    ],
    w: [104, 209, 11, 189, 196, 89, 189, 189, 22, 181],
  },
  { a: [16, 7, 16, 8] },
  { a: [16, 9, 16, 9], t: ['1'], w: [5], h: 'center', v: 'center', pad: '0' },
  { a: [16, 10, 16, 10], t: ['SET'], w: [18], h: 'center', v: 'center', pad: '0' },
  { a: [16, 11, 16, 12], t: ['1'], w: [5], h: 'center', v: 'center' },
  { a: [16, 13, 16, 14], t: ['59,400,000'], w: [44], h: 'center', pad: '0 0 1px' },
  { a: [16, 15, 16, 15], t: ['59,400,000'], w: [54], h: 'flex-end', bold: true },
  { a: [17, 1, 17, 1], t: ['2'], w: [5], h: 'center', v: 'center' },
  {
    a: [17, 2, 17, 6], v: 'center', pad: '0 0 2px 3px',
    t: [
      'PGXH Hydraulic Hand Pump Kit Complete Kit',
      '• Range: 0 to 700 bar g (0 to 10150psi)',
      '• Including carrying case and following accessories:',
      '1m Hydrotech hose',
      '- 1/4” BSP male adapter',
      '- 1/4" NPT male adapter',
    ],
    w: [187, 150, 208, 79, 98, 97],
  },
  { a: [17, 7, 17, 8] },
  { a: [17, 9, 17, 9], t: ['1'], w: [5], h: 'center', v: 'center', pad: '0' },
  { a: [17, 10, 17, 10], t: ['SET'], w: [18], h: 'center', v: 'center', pad: '0' },
  { a: [17, 11, 17, 12], t: ['1'], w: [5], h: 'center', v: 'center' },
  { a: [17, 13, 17, 14], t: ['85,460,000'], w: [44], h: 'center', pad: '0 0 1px' },
  { a: [17, 15, 17, 15], t: ['85,460,000'], w: [54], h: 'flex-end', bold: true },
  { a: [18, 7, 18, 8] },
  { a: [18, 11, 18, 12] },
  { a: [18, 13, 18, 14] },
  { a: [19, 11, 19, 12], t: ['SUB TOTAL'], w: [61], bold: true },
  { a: [19, 13, 19, 15], t: ['144,860,000'], w: [58], h: 'flex-end', bold: true },
  { a: [20, 11, 20, 11], t: ['PPN 10%'], w: [35], bold: true, size: 7.5, pad: '0 0 0 2px' },
  { a: [20, 15, 20, 15], t: ['14,486,000'], w: [52], h: 'flex-end', bold: true },
  { a: [21, 11, 21, 12], t: ['TOTAL'], w: [36], bold: true },
  { a: [21, 13, 21, 15], t: ['159,346,000'], w: [58], h: 'flex-end', bold: true },
  { a: [23, 1, 23, 5], t: ['Diajukan Oleh'], w: [55], h: 'center', v: 'flex-start', pad: '2px 4px 0 0' },
  { a: [23, 6, 23, 11], t: ['Menyetujui'], w: [46], h: 'center', v: 'flex-start', pad: '2px 0 0' },
  { a: [23, 12, 23, 15], t: ['Kanit'], w: [24], h: 'center', v: 'flex-start', pad: '2px 22px 0 0' },
];

const inR = (n: number, lo: number, hi: number) => n >= lo && n <= hi;

function strongRight(r: number, c: number) {
  switch (c) {
    case 1: case 6: case 8: case 10: return inR(r, 12, 18);
    case 4: return r <= 6 && r !== 5;
    case 5: case 11: return r >= 22;
    case 9: return inR(r, 13, 18);
    case 12: return inR(r, 13, 21);
    case 14: return inR(r, 13, 18);
    case 15: return true;
    case 16: return inR(r, 12, 21);
    default: return false;
  }
}
function strongBottom(r: number, c: number) {
  if (r === 6 || r === 14 || r === 18) return c <= 15;
  if (r === 11 || r === 21) return c <= 16;
  if (r === 12) return inR(c, 9, 15);
  if (r === 19) return inR(c, 13, 15);
  return false;
}
function edges([r1, c1, r2, c2]: Area['a']) {
  const sr = strongRight(r1, c2);
  const sb = strongBottom(r2, c1);
  const soft = r1 === 1 && r2 === 4 ? '#fff' : '#d4d4d4';
  const right = `inset -1px 0 0 ${sr ? '#000' : soft}`;
  const bottom = `inset 0 -1px 0 ${sb ? '#000' : soft}`;
  return sb ? `${bottom}, ${right}` : `${right}, ${bottom}`;
}
const toGrid = ([r1, c1, r2, c2]: Area['a']) => `${r1 + 1} / ${c1 + 1} / ${r2 + 2} / ${c2 + 2}`;

const Heading = styled.div`
  font: 13.5px/14px "Noto Sans", sans-serif;
  border-bottom: 1px solid #000;
`;
const LogoBox = styled.div`
  grid-area: 2 / 2 / 6 / 6;
  z-index: 1;
  padding: 8px 0 0 1px;
`;
const Selection = styled.div`
  grid-area: 22 / 14 / 23 / 17;
  z-index: 2;
  margin: -2px -1px -1px -2px;
  border: 2px solid #217346;
  position: relative;
  &::after {
    content: '';
    position: absolute;
    right: -3px;
    bottom: -3px;
    width: 5px;
    height: 5px;
    background: #217346;
    box-shadow: 0 0 0 1px #fff;
  }
`;

const Logo = () => (
  <svg width="158" height="48" viewBox="0 0 158 48">
    <rect x="0" y="1" width="31" height="40" fill="#fff200" />
    <path d="M5 17Q8 14 11 17T17 17T26 16M5 22Q8 19 11 22T17 22T26 21M5 27Q8 24 11 27T17 27T26 26" fill="none" stroke="#1d93a8" strokeWidth="1.7" />
    <path d="M17 7L14 7.5L7.5 22L17.5 21L17.5 35M13 12L11 20.5L23 18L17.5 35L15 30" fill="none" stroke="#e0202c" strokeWidth="1.8" />
    <text x="38" y="15.5" textLength="116" lengthAdjust="spacingAndGlyphs" fontFamily="Lato" fontSize="20" fill="#d8283a">INDONESIA</text>
    <g fill="#2f3f92" stroke="#2f3f92" fontFamily="Open Sans" fontWeight="800" fontSize="28" strokeWidth="1">
      <text x="39" y="39.5" textLength="20" lengthAdjust="spacingAndGlyphs">P</text>
      <text x="80" y="39.5" textLength="75" lengthAdjust="spacingAndGlyphs">WER</text>
    </g>
    <path d="M73 18Q60 19 60 30Q60.5 36 66 40L71 31H64Z" fill="#2f3f92" />
    <path d="M83 18L75 26H80L69 40Q80 41 84 33L86 24Z" fill="#2f3f92" />
    <circle cx="64.5" cy="45" r="2.6" fill="#d8283a" />
  </svg>
);

/* scroll bars */
const VScroll = styled.div`
  width: 22px;
  padding: 3px 2px 0 4px;
  display: flex;
  flex-direction: column;
  border-left: 1px solid #b5b5b5;
`;
const ScrollBtn = styled.div`
  width: 15px;
  height: 15px;
  flex: none;
  background: #fff;
  border: 1px solid #ababab;
  display: flex;
  align-items: center;
  justify-content: center;
`;
const VTrack = styled.div`
  flex: 1;
  width: 15px;
  background: #dbdbdb;
  padding-top: 1px;
`;
const VThumb = styled.div`
  height: 300px;
  background: #fff;
  border: 1px solid #ababab;
`;

function Sheet() {
  const covered = new Set<string>();
  AREAS.forEach(({ a: [r1, c1, r2, c2] }) => {
    for (let r = r1; r <= r2; r++) for (let c = c1; c <= c2; c++) covered.add(`${r}-${c}`);
  });
  const plain: React.ReactNode[] = [];
  ROWS.forEach((_, ri) =>
    COLS.forEach((__, ci) => {
      const r = ri + 1;
      const c = ci + 1;
      if (covered.has(`${r}-${c}`)) return;
      const a: Area['a'] = [r, c, r, c];
      plain.push(<Cell key={`${r}-${c}`} $area={toGrid(a)} $shadow={edges(a)} />);
    })
  );
  return (
    <SheetArea>
      <SheetGrid>
        <Corner><svg width="7" height="7" viewBox="0 0 7 7"><path d="M7 0V7H0Z" fill="#b5b5b5" /></svg></Corner>
        {NAMES.map((n, i) => <ColHead key={n} $on={inR(i, 12, 14)}>{n}</ColHead>)}
        {ROWS.map((_, i) => (
          <RowHead key={i} $on={i === 20} $top={i === 22} style={{ gridRow: i + 2, gridColumn: 1 }}>{i + 1}</RowHead>
        ))}
        {plain}
        {AREAS.map(x => (
          <Cell key={x.a.join()} $area={toGrid(x.a)} $shadow={edges(x.a)} $h={x.h} $v={x.v} $bold={x.bold} $size={x.size} $lh={x.lh} $pad={x.pad}>
            {x.t?.map((line, i) =>
              x.a[0] === 3
                ? <Heading key={i}><Fit w={x.w![i]}>{line}</Fit></Heading>
                : <Fit key={i} w={x.w![i]}>{line}</Fit>
            )}
          </Cell>
        ))}
        <LogoBox><Logo /></LogoBox>
        <Selection />
      </SheetGrid>
      <VScroll>
        <ScrollBtn><svg width="7" height="5" viewBox="0 0 7 5"><path d="M0 4.5L3.5 0.5L7 4.5Z" fill="#666" /></svg></ScrollBtn>
        <VTrack><VThumb /></VTrack>
        <ScrollBtn><svg width="7" height="5" viewBox="0 0 7 5"><path d="M0 0.5H7L3.5 4.5Z" fill="#666" /></svg></ScrollBtn>
      </VScroll>
    </SheetArea>
  );
}

/* ---------- sheet tabs ---------- */

const TabStrip = styled.section`
  height: 28px;
  flex: none;
  display: flex;
  border-top: 1px solid #9f9f9f;
`;
const SheetTab = styled.div`
  width: 86px;
  height: 25px;
  margin: -1px 0 0 41px;
  background: #fff;
  border: 1px solid #9f9f9f;
  border-top: 0;
  border-bottom: 2px solid #217346;
  color: #217346;
  font-weight: 700;
  display: flex;
  align-items: center;
  justify-content: center;
  padding-top: 2px;
`;
const HScroll = styled.div`
  width: 509px;
  height: 15px;
  margin: 6px 0 0 15px;
  display: flex;
`;
const HTrack = styled.div`
  flex: 1;
  height: 15px;
  background: #dbdbdb;
`;
const HThumb = styled.div`
  width: 461px;
  height: 15px;
  background: #fff;
  border: 1px solid #ababab;
`;
const AddSheet = styled.div`
  width: 16px;
  height: 26px;
  margin-left: 33px;
  display: flex;
  align-items: center;
`;

function SheetTabs() {
  return (
    <TabStrip>
      <Slot $w={5} $ml={26} $h={26}><svg width="5" height="8" viewBox="0 0 5 8"><path d="M5 0V8L0 4Z" fill="#c2c2c2" /></svg></Slot>
      <Slot $w={5} $ml={23} $h={26}><svg width="5" height="8" viewBox="0 0 5 8"><path d="M0 0V8L5 4Z" fill="#c2c2c2" /></svg></Slot>
      <SheetTab><Fit w={61}>Sheet1 (2)</Fit></SheetTab>
      <AddSheet>
        <svg width="16" height="16" viewBox="0 0 16 16" fill="none" stroke="#777">
          <circle cx="8" cy="8" r="7.3" />
          <path d="M8 4.2V11.8M4.2 8H11.8" strokeWidth="2" />
        </svg>
      </AddSheet>
      <Slot $w={2} $ml={584} $h={26}>
        <svg width="2" height="11" viewBox="0 0 2 11"><path d="M0 0H2V2H0ZM0 4.5H2V6.5H0ZM0 9H2V11H0Z" fill="#aaa" /></svg>
      </Slot>
      <HScroll>
        <ScrollBtn><svg width="5" height="7" viewBox="0 0 5 7"><path d="M4.5 0V7L0.5 3.5Z" fill="#666" /></svg></ScrollBtn>
        <HTrack><HThumb /></HTrack>
        <ScrollBtn><svg width="5" height="7" viewBox="0 0 5 7"><path d="M0.5 0V7L4.5 3.5Z" fill="#666" /></svg></ScrollBtn>
      </HScroll>
    </TabStrip>
  );
}

/* ---------- status bar ---------- */

const StatusBar = styled.footer`
  height: 22px;
  flex: none;
  display: flex;
  align-items: center;
  border-top: 1px solid #c3c3c3;
  background: #f1f1f1;
  font-size: 11px;
`;

function Status() {
  return (
    <StatusBar>
      <Slot $w={31} $ml={7}><Fit w={31}>Ready</Fit></Slot>
      <Slot $w={38} $ml={1036} $h={21} $bg="#c9c9c9">
        <svg width="13" height="13" viewBox="0 0 13 13" fill="none" stroke="#666"><path d="M0.5 0.5H12.5V12.5H0.5ZM4.5 0V13M8.5 0V13M0 4.5H13M0 8.5H13" /></svg>
      </Slot>
      <Slot $w={38}>
        <svg width="14" height="13" viewBox="0 0 14 13" fill="none" stroke="#666"><path d="M0.5 0.5H13.5V12.5H0.5ZM3.5 2.5H10.5V10.5H3.5ZM5 4.5H9M5 6.5H9M5 8.5H9" /></svg>
      </Slot>
      <Slot $w={38}>
        <svg width="14" height="13" viewBox="0 0 14 13" fill="none" stroke="#666"><path d="M0.5 0.5H13.5V12.5H0.5ZM5.5 0V7M0 7.5H10V0" /></svg>
      </Slot>
      <Slot $w={7} $ml={5}><svg width="7" height="2" viewBox="0 0 7 2"><path d="M0 0H7V2H0Z" fill="#555" /></svg></Slot>
      <Slot $w={101} $ml={3}>
        <svg width="101" height="12" viewBox="0 0 101 12">
          <path d="M0 6H101V7H0ZM50 4H51V9H50Z" fill="#a8a8a8" />
          <path d="M31 1H35V12H31Z" fill="#555" />
        </svg>
      </Slot>
      <Slot $w={8} $ml={3}><svg width="8" height="8" viewBox="0 0 8 8"><path d="M3 0H5V3H8V5H5V8H3V5H0V3H3Z" fill="#555" /></svg></Slot>
      <Slot $w={21} $ml={15}><Fit w={21}>67%</Fit></Slot>
    </StatusBar>
  );
}

/* ---------- taskbar ---------- */

const TaskBar = styled.footer`
  height: 40px;
  flex: none;
  display: flex;
  align-items: center;
  background: #252525;
  border-top: 1px solid #000;
  color: #fff;
`;
const SearchBox = styled.div`
  width: 344px;
  height: 39px;
  padding-left: 12px;
  background: #333;
  color: #a0a0a0;
  font-size: 14px;
  display: flex;
  align-items: center;
`;
const AppButton = styled.div<{ $w: number; $ml?: number; $active?: boolean }>`
  width: ${p => p.$w}px;
  height: 39px;
  margin-left: ${p => p.$ml || 0}px;
  flex: none;
  display: flex;
  align-items: center;
  justify-content: center;
  border-bottom: 2px solid #76b5ea;
  background: ${p => (p.$active ? '#4e4e4e' : 'transparent')};
`;
const Clock = styled.div`
  width: 50px;
  margin-left: 13px;
  display: flex;
  flex-direction: column;
  align-items: center;
  line-height: 17px;
`;

function Task() {
  return (
    <TaskBar>
      <Slot $w={48}>
        <svg width="16" height="16" viewBox="0 0 16 16"><path d="M0 2.3L6.5 1.3V7.5H0ZM7.3 1.2L16 0V7.5H7.3ZM0 8.3H6.5V14.6L0 13.7ZM7.3 8.3H16V16L7.3 14.7Z" fill="#fff" /></svg>
      </Slot>
      <SearchBox><Fit w={195}>Search the web and Windows</Fit></SearchBox>
      <Slot $w={48}>
        <svg width="20" height="14" viewBox="0 0 20 14" fill="none" stroke="#fff"><path d="M4.5 0.5H15.5V13.5H4.5ZM3 2.5H0.5V11.5H3M17 2.5H19.5V11.5H17" strokeWidth="1.2" /></svg>
      </Slot>
      <AppButton $w={40} $ml={6}>
        <svg width="22" height="22" viewBox="0 0 22 22">
          <circle cx="11" cy="11" r="10.7" fill="#fbc116" />
          <path d="M11 11L1.7 5.7A10.7 10.7 0 0 1 20.3 5.7L20.5 6.2H11Z" fill="#dd4b3e" />
          <path d="M11 11L1.7 5.7A10.7 10.7 0 0 0 10 21.7L15.2 13.4Z" fill="#1ca261" />
          <circle cx="11" cy="11" r="5" fill="#fff" />
          <circle cx="11" cy="11" r="4" fill="#4a8af4" />
        </svg>
      </AppButton>
      <AppButton $w={40} $ml={9}>
        <svg width="20" height="21" viewBox="0 0 20 21"><path d="M0 9.5C1 3.5 5 0 10.5 0C16.5 0 20 4 20 9.5V12H6.5C6.8 15.5 9.5 17 13 17C15.5 17 17.5 16.2 18.8 15.3V19.5C17 20.5 14.6 21 12 21C6 21 2.3 17.6 2.3 12.8C2.3 9.3 4.4 6.5 7 5.3C4.3 5.4 1.5 7 0 9.5ZM6.7 8.4H13.8C13.8 6 12.8 4.7 10.6 4.7C8.3 4.7 7 6.3 6.7 8.4Z" fill="#0078d7" /></svg>
      </AppButton>
      <AppButton $w={40} $ml={9}>
        <svg width="22" height="20" viewBox="0 0 22 20">
          <path d="M0 1H8L10 3H21V18H0Z" fill="#f3d06d" />
          <path d="M2 4H22V18H2Z" fill="#fbe294" />
          <path d="M4 10H18V19H14V14H8V19H4Z" fill="#35a6e0" />
        </svg>
      </AppButton>
      <AppButton $w={40} $ml={9}>
        <svg width="24" height="24" viewBox="0 0 24 24">
          <path d="M0 0H17V6H24V24H0Z" fill="#f6891f" />
          <path d="M19 0L24 5H19Z" fill="#f6891f" />
          <path d="M16.5 6.2Q11 3.5 8 7.5Q5 12.5 8.5 15.2Q12.5 17 15.5 13V10.5H11.5" fill="none" stroke="#fff" strokeWidth="2.4" />
          <text x="7" y="22.5" fontFamily="Open Sans" fontSize="5" fontWeight="700" fill="#fff">PDF</text>
        </svg>
      </AppButton>
      <AppButton $w={40} $ml={9}>
        <svg width="22" height="20" viewBox="0 0 22 20">
          <path d="M12 2.5H21.5V17.5H12Z" fill="#fff" stroke="#2b579a" />
          <path d="M13 5.5H20M13 7.5H20M13 9.5H20M13 11.5H20M13 13.5H20" stroke="#2b579a" />
          <path d="M0 2L13 0V20L0 18Z" fill="#2b579a" />
          <text x="2" y="14" fontFamily="Open Sans" fontSize="10" fontWeight="700" fill="#fff">W</text>
        </svg>
      </AppButton>
      <AppButton $w={48} $ml={5} $active>
        <svg width="22" height="20" viewBox="0 0 22 20">
          <path d="M12 2.5H21.5V17.5H12Z" fill="#fff" stroke="#217346" />
          <path d="M13 5.5H20M13 8.5H20M13 11.5H20M13 14.5H20M17.5 4V16" stroke="#217346" />
          <path d="M0 2L13 0V20L0 18Z" fill="#217346" />
          <text x="3" y="14" fontFamily="Open Sans" fontSize="11" fontWeight="700" fill="#fff">X</text>
        </svg>
      </AppButton>
      <AppButton $w={40} $ml={5}>
        <svg width="20" height="20" viewBox="0 0 20 20">
          <path d="M3 1H19V18H3Z" fill="#8fc3e2" />
          <path d="M1 2.5H16V19.5H1Z" fill="#b5d9ee" stroke="#5d9fc9" />
          <circle cx="8.8" cy="10.5" r="6.5" fill="#ee7b22" />
          <path d="M6.5 6.8L13 10.5L6.5 14.2Z" fill="#fff" />
        </svg>
      </AppButton>
      <AppButton $w={40} $ml={9}>
        <svg width="24" height="19" viewBox="0 0 24 19">
          <path d="M2 1.5H21L23 6H4Z" fill="#a93a86" />
          <path d="M4 6H23V8H4Z" fill="#e7b7d8" />
          <path d="M2 7.5L4 12H23V8H4Z" fill="#3c4fd0" />
          <path d="M2 13L4 18H23V12H4Z" fill="#1f8a38" />
          <path d="M0 3L4 6V8L1 6ZM0 9L4 11V13L1 11ZM0 14L4 16V18L1 17Z" fill="#ddd" />
          <path d="M12 0H16V19H12Z" fill="#8f5a2a" />
          <path d="M11 7.5H17V12.5H11Z" fill="none" stroke="#e6c04a" strokeWidth="1.4" />
        </svg>
      </AppButton>
      <Slot $w={12} $ml={348}><svg width="12" height="7" viewBox="0 0 12 7"><path d="M0.6 6.3L6 1L11.4 6.3" fill="none" stroke="#fff" strokeWidth="1.3" /></svg></Slot>
      <Slot $w={16} $ml={10}>
        <svg width="16" height="12" viewBox="0 0 16 12" fill="none" stroke="#fff">
          <path d="M6 2.5H14.5V10.5H5.5V8M15.5 5V8" />
          <path d="M8 4H11V9H7Z" fill="#fff" stroke="none" />
          <path d="M1.5 0V2.5M4.5 0V2.5M0.5 3H5.5V5Q3 8 0.5 5ZM3 6.5V10.5H5.5" />
        </svg>
      </Slot>
      <Slot $w={13} $ml={11}>
        <svg width="13" height="13" viewBox="0 0 13 13" fill="none" stroke="#fff" strokeWidth="1.1">
          <path d="M1 9.5A10 10 0 0 1 11.5 1.2" stroke="#999" />
          <path d="M2.5 11A8 8 0 0 1 12 4M5 12.3A6 6 0 0 1 12.3 7" />
          <path d="M8 12.5A4 4 0 0 1 12.5 9V12.5Z" fill="#fff" stroke="none" />
        </svg>
      </Slot>
      <Slot $w={16} $ml={8}>
        <svg width="16" height="13" viewBox="0 0 16 13" fill="none" stroke="#fff">
          <path d="M0.5 4.5H2.5L6 1.2V11.8L2.5 8.5H0.5Z" />
          <path d="M8 4.5Q9.4 6.5 8 8.5" />
          <path d="M10 3Q12.4 6.5 10 10M12.3 1.5Q16 6.5 12.3 11.5" stroke="#999" />
        </svg>
      </Slot>
      <Slot $w={16} $ml={8}>
        <svg width="16" height="16" viewBox="0 0 16 16">
          <path d="M0 1H16V12.5H11L8 15.8V12.5H0Z" fill="#fff" />
          <path d="M3 4.5H13M3 6.8H13M3 9.2H9" stroke="#252525" />
        </svg>
      </Slot>
      <Clock>
        <Fit w={48}>10:33 AM</Fit>
        <Fit w={46}>7/7/2017</Fit>
      </Clock>
      <Slot $w={1} $ml={10} $h={39} $bg="#666" />
    </TaskBar>
  );
}

export default function App() {
  return (
    <Window>
      <Global />
      <Title />
      <Tabs />
      <Ribbon />
      <Formula />
      <Sheet />
      <SheetTabs />
      <Status />
      <Task />
    </Window>
  );
}
